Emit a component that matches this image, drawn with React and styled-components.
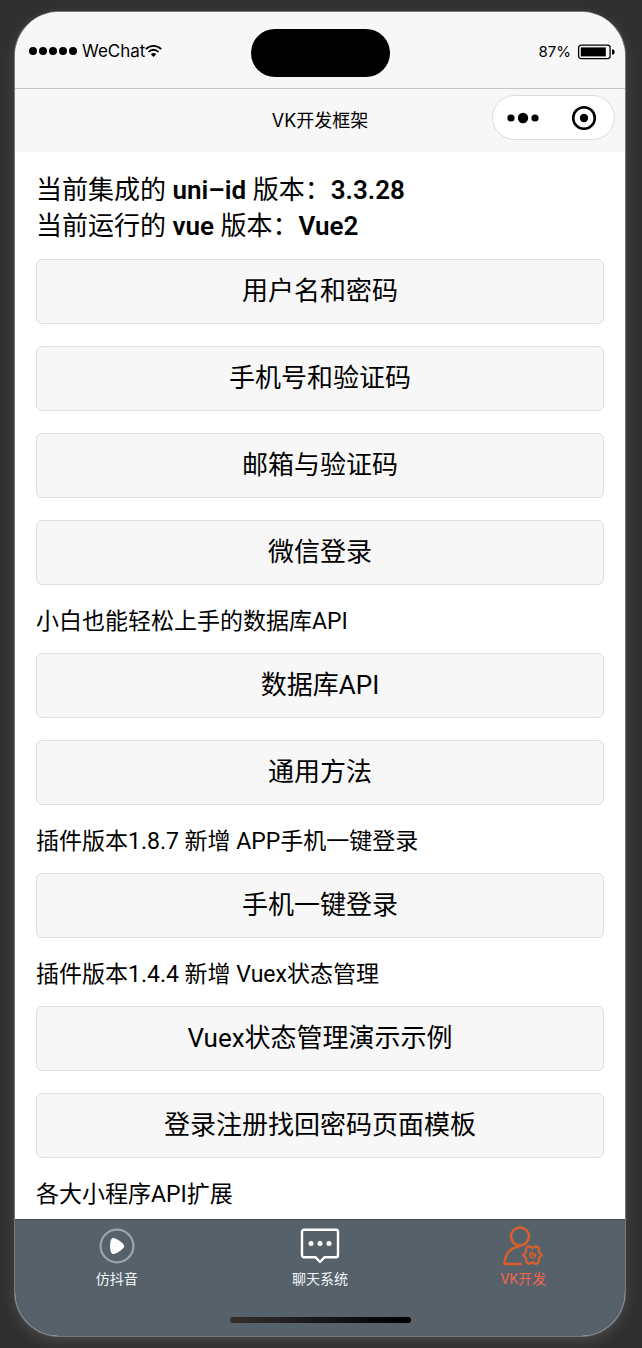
import React, { useState } from "react";
import styled, { createGlobalStyle } from "styled-components";

const sections = [
  { items: ["用户名和密码", "手机号和验证码", "邮箱与验证码", "微信登录"] },
  { title: "小白也能轻松上手的数据库API", items: ["数据库API", "通用方法"] },
  { title: "插件版本1.8.7 新增 APP手机一键登录", items: ["手机一键登录"] },
  {
    title: "插件版本1.4.4 新增 Vuex状态管理",
    items: ["Vuex状态管理演示示例", "登录注册找回密码页面模板"],
  },
  { title: "各大小程序API扩展", items: [] },
];

const SignalDots = () => (
  <svg width="49" height="10" viewBox="0 0 49 10" aria-hidden="true">
    {[4, 14, 24, 34, 44].map((x) => (
      <circle key={x} cx={x} cy="5" r="4" />
    ))}
  </svg>
);

const WifiIcon = () => (
  <svg width="17" height="14" viewBox="0 0 17 14" fill="none" stroke="#000" strokeWidth="1.8" aria-hidden="true">
    <path d="M0.8 5.2C5 0.7 12 0.7 16.2 5.2" />
    <path d="M3.5 8C6.3 5 10.7 5 13.5 8" />
    <path d="M5.8 10.2C7.4 8.6 9.6 8.6 11.2 10.2L8.5 13Z" fill="#000" stroke="none" />
  </svg>
);

const BatteryIcon = () => (
  <svg width="38" height="16" viewBox="0 0 38 16" aria-hidden="true">
    <rect x="1.6" y="1.2" width="31.5" height="13.4" rx="2.5" fill="none" stroke="#000" strokeWidth="1.3" />
    <rect x="3.8" y="3.4" width="25" height="9" fill="#000" />
    <path d="M35 5.4h1c1 0 1.6 1 1.6 2.5s-.6 2.5-1.6 2.5h-1z" />
  </svg>
);

const MoreIcon = () => (
  <svg width="32" height="12" viewBox="0 0 32 12" aria-hidden="true">
    <circle cx="4" cy="6" r="3.6" />
    <circle cx="16" cy="6" r="5.2" />
    <circle cx="28" cy="6" r="3.6" />
  </svg>
);

const CloseIcon = () => (
  <svg width="26" height="26" viewBox="0 0 26 26" aria-hidden="true">
    <circle cx="13" cy="13" r="10.8" fill="none" stroke="#000" strokeWidth="2.6" />
    <circle cx="13" cy="13" r="4.2" />
  </svg>
);

const PlayIcon = () => (
  <svg width="40" height="40" viewBox="0 0 40 40" aria-hidden="true">
    <circle cx="20" cy="20" r="16.4" fill="none" stroke="#9aa5ac" strokeWidth="2.2" />
    <path
      d="M15.4 12.2c2.800-1 10.600 4.600 11.600 7 .3.600.3 1.200 0 1.800-1 2.400-8.400 7.600-11.200 7-3.400-.8-3.600-14.700-.4-15.800z"
      fill="#fff"
    />
  </svg>
);

const ChatIcon = () => (
  <svg width="40" height="40" viewBox="0 0 40 40" aria-hidden="true">
    <path
      d="M4 3.8h32a2 2 0 0 1 2 2v23.4a2 2 0 0 1-2 2H24.6L20 36l-4.6-4.8H4a2 2 0 0 1-2-2V5.8a2 2 0 0 1 2-2z"
      fill="none"
      stroke="#fff"
      strokeWidth="2.4"
      strokeLinejoin="round"
    />
    <circle cx="11" cy="17.6" r="2.5" fill="#fff" />
    <circle cx="20" cy="17.6" r="2.5" fill="#fff" />
    <circle cx="29" cy="17.6" r="2.5" fill="#fff" />
  </svg>
);

const UserGearIcon = () => (
  <svg
    width="40"
    height="40"
    viewBox="0 0 40 40"
    fill="none"
    stroke="#d9602e"
    strokeWidth="2.5"
    strokeLinecap="round"
    strokeLinejoin="round"
    aria-hidden="true"
  >
    <circle cx="17" cy="10.4" r="9" />
    <path d="M15.5 20.500C7 22 2 28 1.500 38H18" />
    <path
      d="M26 20.2L29.5 22L33 20.2L36 22.2L35.8 25.8L39 29L35.8 32.2L36 35.8L33 38L29.5 36.2L26 38L23 35.8L23.2 32.2L20 29L23.2 25.8L23 22.2Z"
      strokeWidth="2.2"
    />
    <path d="M28 26.4C25.8 28 26.200 31.8 29.5 32C32 32 33 29.600 32.2 28M29.5 26.5V29H31" strokeWidth="1.5" />
  </svg>
);

const tabs = [
  { label: "仿抖音", Icon: PlayIcon },
  { label: "聊天系统", Icon: ChatIcon },
  { label: "VK开发", Icon: UserGearIcon },
];

export default function App() {
  const [current, setCurrent] = useState(2);

  return (
    <>
      <GlobalStyle />
      <Stage>
        <Phone>
          <StatusBar>
            <Carrier>
              <SignalDots />
              <span>WeChat</span>
              <WifiIcon />
            </Carrier>
            <Island />
            <Battery>
              <span>87%</span>
              <BatteryIcon />
            </Battery>
          </StatusBar>
          <NavBar>
            <h1>VK开发框架</h1>
            <Capsule>
              <button type="button" aria-label="更多">
                <MoreIcon />
              </button>
              <button type="button" aria-label="关闭">
                <CloseIcon />
              </button>
            </Capsule>
          </NavBar>
          <Content>
            <Versions>
              <p>
                当前集成的 <b>uni–id</b> 版本：<b>3.3.28</b>
              </p>
              <p>
                当前运行的 <b>vue</b> 版本：<b>Vue2</b>
              </p>
            </Versions>
            {sections.map((section, index) => (
              <section key={index}>
                {section.title && <SectionTitle>{section.title}</SectionTitle>}
                {section.items.map((item) => (
                  <MenuButton key={item} type="button">
                    {item}
                  </MenuButton>
                ))}
              </section>
            ))}
          </Content>
          <TabBar>
            <Tabs>
              {tabs.map(({ label, Icon }, index) => (
                <Tab
                  key={label}
                  type="button"
                  $active={index === current}
                  onClick={() => setCurrent(index)}
                >
                  <Icon />
                  <span>{label}</span>
                </Tab>
              ))}
            </Tabs>
            <HomeIndicator />
          </TabBar>
        </Phone>
      </Stage>
    </>
  );
}

const GlobalStyle = createGlobalStyle`
  * {
    box-sizing: border-box;
  }
  body {
    margin: 0;
    background: #303030;
    color: #000;
    font-family: Roboto, "Noto Sans CJK SC", sans-serif;
  }
  h1, h2, p {
    margin: 0;
    font-weight: 400;
  }
  button {
    padding: 0;
    border: 0;
    background: none;
    color: inherit;
    font-family: inherit;
    cursor: pointer;
  }
  svg {
    display: block;
    flex: none;
  }
`;

const Stage = styled.div`
  display: flex;
  height: 100vh;
  padding: 12px 17px 12px 15px;
`;

const Phone = styled.main`
  flex: 1;
  min-width: 0;
  display: flex;
  flex-direction: column;
  overflow: hidden;
  border-radius: 44px;
  background: #fff;
  box-shadow: 0 0 0 1px #77797a, 0 4px 14px rgba(255, 255, 255, 0.14);
`;

const StatusBar = styled.div`
  display: grid;
  grid-template-columns: 1fr auto 1fr;
  align-items: center;
  padding: 17px 10px 11px;
  border-bottom: 1px solid #c4c4c4;
  background: #f7f7f7;
  font-family: Inter, sans-serif;
`;

const Carrier = styled.div`
  display: flex;
  align-items: center;
  padding: 0 0 4px 4px;
  font-size: 17px;
  line-height: 20px;
  span {
    margin-left: 4px;
  }
`;

const Island = styled.div`
  width: 139px;
  height: 48px;
  border-radius: 24px;
  background: #000;
`;

const Battery = styled.div`
  display: flex;
  align-items: center;
  justify-content: flex-end;
  gap: 6px;
  padding-bottom: 2px;
  font-size: 15px;
  line-height: 20px;
`;

const NavBar = styled.header`
  display: grid;
  grid-template-columns: 1fr auto 1fr;
  padding: 6px 10px 11px;
  background: #f7f7f7;
  font-family: Inter, "Noto Sans CJK SC", sans-serif;
  h1 {
    grid-column: 2;
    padding-top: 6px;
    font-size: 18px;
    line-height: 40px;
  }
`;

const Capsule = styled.div`
  justify-self: end;
  display: grid;
  grid-template-columns: 1fr 1fr;
  width: 123px;
  height: 45px;
  border: 1px solid #dcdcdc;
  border-radius: 23px;
  background: #fff;
  button {
    display: grid;
    place-items: center;
  }
`;

const Content = styled.div`
  flex: 1;
  min-height: 0;
  padding: 20px 21px 0;
  overflow-y: auto;
  scrollbar-width: none;
`;

const Versions = styled.div`
  margin-bottom: 15px;
  font-size: 26px;
  line-height: 36px;
  b {
    font-weight: 600;
  }
`;

const SectionTitle = styled.h2`
  margin-bottom: 16px;
  font-size: 23px;
  line-height: 30px;
`;

const MenuButton = styled.button`
  display: block;
  width: 100%;
  height: 65px;
  margin-bottom: 22px;
  padding-bottom: 2px;
  border: 1px solid #dfdfdf;
  border-radius: 6px;
  background: #f7f7f7;
  font-size: 26px;
  line-height: 36px;
`;

const TabBar = styled.footer`
  display: flex;
  flex-direction: column;
  align-items: center;
  gap: 28px;
  padding: 6px 0 13px;
  border-top: 1px solid #444b50;
  background: #576169;
`;

const Tabs = styled.nav`
  display: grid;
  grid-template-columns: repeat(3, 1fr);
  width: 100%;
`;

const Tab = styled.button`
  display: flex;
  flex-direction: column;
  align-items: center;
  gap: 3px;
  color: ${({ $active }) => ($active ? "#f0674d" : "#f2f6fa")};
  font-size: 14px;
  line-height: 20px;
`;

const HomeIndicator = styled.div`
  width: 181px;
  height: 6px;
  border-radius: 3px;
  background: linear-gradient(90deg, #332f2d, #000);
`;
